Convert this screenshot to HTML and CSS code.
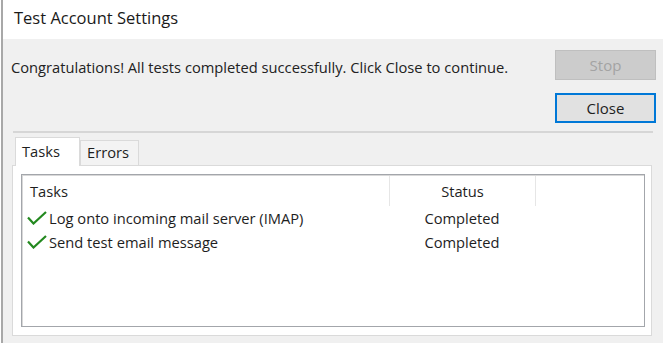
FILE: index.html
```html
<!DOCTYPE html>
<html lang="en">

<head>
  <meta charset="UTF-8" />
  <title>Test Account Settings</title>
  <link rel="stylesheet" href="styles.css">
</head>

<body>
  <div class="window">
    <!-- Title bar -->
    <div class="title-bar">Test Account Settings</div>

    <div class="content">
      <!-- Message and buttons -->
      <div class="top-row">
        <div class="message">Congratulations! All tests completed successfully. Click Close to continue.</div>
        <div class="buttons">
          <button class="btn btn-disabled" disabled>Stop</button>
          <button class="btn btn-default">Close</button>
        </div>
      </div>

      <div class="separator"></div>

      <!-- Tabs -->
      <div class="tabs">
        <div class="tab active">Tasks</div>
        <div class="tab">Errors</div>
      </div>

      <div class="tab-panel">
        <div class="list">
          <div class="list-row list-header">
            <div class="col-task">Tasks</div>
            <div class="col-status">Status</div>
            <div class="col-rest"></div>
          </div>
          <div class="list-row">
            <div class="col-task">
              <svg class="check" width="20" height="14" viewBox="0 0 20 14">
                <path d="M1 6.5 L6.5 12.5 L19 1" fill="none" stroke="#23891f" stroke-width="2.2" />
              </svg>
              Log onto incoming mail server (IMAP)
            </div>
            <div class="col-status">Completed</div>
            <div class="col-rest"></div>
          </div>
          <div class="list-row">
            <div class="col-task">
              <svg class="check" width="20" height="14" viewBox="0 0 20 14">
                <path d="M1 6.5 L6.5 12.5 L19 1" fill="none" stroke="#23891f" stroke-width="2.2" />
              </svg>
              Send test email message
            </div>
            <div class="col-status">Completed</div>
            <div class="col-rest"></div>
          </div>
        </div>
      </div>
    </div>
  </div>
</body>

</html>
```

FILE: styles.css
```css
* {
  margin: 0;
  padding: 0;
  box-sizing: border-box;
}

body {
  background-color: #ffffff;
  font-family: "Open Sans", "Noto Sans", sans-serif;
  color: #1e1e1e;
  height: 353px;
  overflow: hidden;
}

/* Window */
.window {
  margin-left: 1px;
  border-left: 2px solid #a8a8a8;
  height: 343px;
  display: flex;
  flex-direction: column;
}

.title-bar {
  height: 39px;
  background-color: #ffffff;
  padding-left: 11px;
  padding-top: 6px;
  font-size: 16.5px;
  color: #1a1a1a;
}

.content {
  flex: 1;
  background-color: #f0f0f0;
  padding: 0 7px 0 8px;
  display: flex;
  flex-direction: column;
}

/* Message + buttons */
.top-row {
  display: flex;
  justify-content: space-between;
  padding-top: 11px;
}

.message {
  font-size: 14.7px;
  padding-top: 7px;
  color: #222;
}

.buttons {
  display: flex;
  flex-direction: column;
  gap: 13px;
}

.btn {
  width: 101px;
  height: 30px;
  font-family: "Open Sans", "Noto Sans", sans-serif;
  font-size: 15px;
  background-color: #e1e1e1;
  border: 1px solid #adadad;
}

.btn-disabled {
  background-color: #cccccc;
  border-color: #bfbfbf;
  color: #a3a3a3;
}

.btn-default {
  border: 2px solid #0078d7;
  color: #1e1e1e;
}

.separator {
  margin: 8px 3px 0 2px;
  height: 2px;
  background-color: #d6d6d6;
}

/* Tabs */
.tabs {
  display: flex;
  align-items: flex-end;
  margin-top: 4px;
  padding-left: 4px;
  font-size: 14.7px;
}

.tab {
  height: 25px;
  padding: 0 8px 0 6px;
  border: 1px solid #dadada;
  border-bottom: none;
  background-color: #f3f3f3;
  line-height: 23px;
  width: 59px;
}

.tab.active {
  height: 29px;
  width: 65px;
  background-color: #ffffff;
  margin-bottom: -1px;
  position: relative;
  z-index: 1;
  padding-left: 6px;
  line-height: 26px;
}

.tab-panel {
  flex: 1;
  margin: 0 4px 7px 1px;
  background-color: #ffffff;
  border: 1px solid #dadada;
  padding: 8px 6px 8px 8px;
  display: flex;
}

/* List */
.list {
  flex: 1;
  border: 1px solid #a3a6ab;
  box-shadow: inset 1px 1px 0 #d8d8d8;
  font-size: 14.7px;
}

.list-row {
  display: flex;
  height: 24px;
  align-items: center;
}

.list-header {
  height: 31px;
  align-items: stretch;
}

.list-header > div {
  display: flex;
  align-items: center;
  margin-top: 1px;
}

.list-header .col-status,
.list-header .col-rest {
  border-left: 1px solid #e6e6e6;
}

.list-header .col-status {
  justify-content: center;
}

.col-task {
  width: 367px;
  padding-left: 8px;
  display: flex;
  align-items: center;
}

.list-row .col-task .check {
  margin-left: -3px;
  margin-right: 2px;
}

.col-status {
  width: 146px;
  text-align: center;
}

.col-rest {
  width: 0;
}
```
